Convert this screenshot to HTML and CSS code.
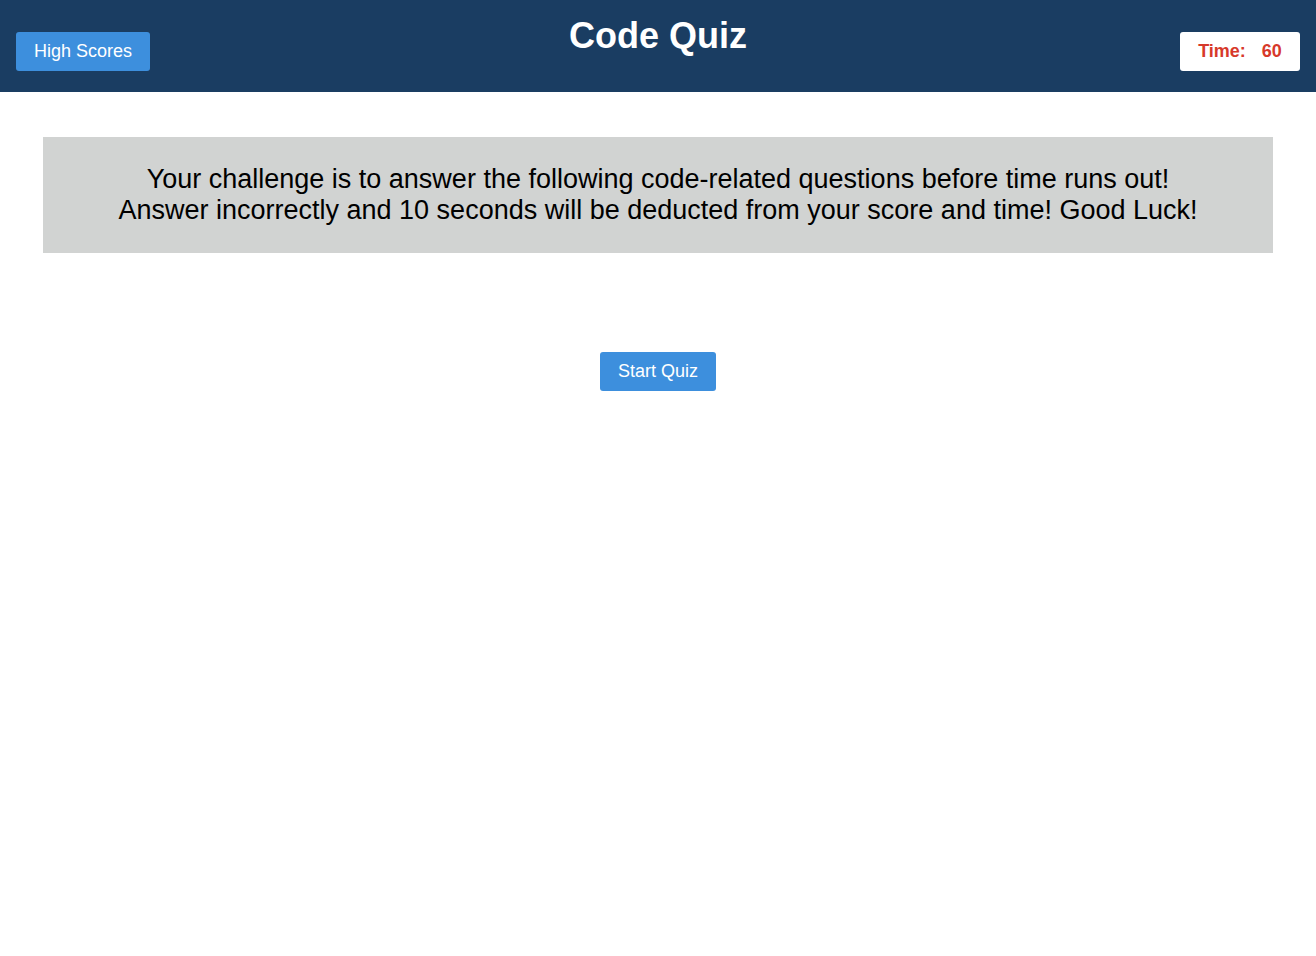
FILE: index.html
```html
<!DOCTYPE html>
<html>
<head>
<meta charset="utf-8">
<title>Code Quiz</title>
<link rel="stylesheet" href="styles.css">
</head>
<body>
<header class="topbar">
  <div class="left"><button class="btn">High Scores</button></div>
  <h1 class="title">Code Quiz</h1>
  <div class="right"><div class="timer"><span>Time:</span><span>60</span></div></div>
</header>
<main class="content">
  <div class="intro">
    <p>Your challenge is to answer the following code-related questions before time runs out!<br>Answer incorrectly and 10 seconds will be deducted from your score and time! Good Luck!</p>
  </div>
  <div class="start">
    <button class="btn">Start Quiz</button>
  </div>
</main>
</body>
</html>
```

FILE: styles.css
```css
* { box-sizing: border-box; }
body {
  margin: 0;
  font-family: "Liberation Sans", Arial, sans-serif;
  background: #fff;
}
.topbar {
  height: 92px;
  background: #1a3d62;
  display: grid;
  grid-template-columns: 1fr auto 1fr;
  align-items: start;
  padding: 0 16px;
}
.left { display: flex; justify-content: flex-start; }
.right { display: flex; justify-content: flex-end; }
.btn {
  font-family: "Liberation Sans", Arial, sans-serif;
  font-size: 18px;
  color: #fff;
  background: #3d8fdd;
  border: none;
  border-radius: 3px;
  height: 39px;
  padding: 0 18px;
  cursor: pointer;
}
.topbar .btn { margin-top: 32px; }
.title {
  margin: 0;
  margin-top: 15px;
  font-size: 36px;
  font-weight: bold;
  color: #fff;
  line-height: 41px;
}
.timer {
  margin-top: 32px;
  width: 120px;
  height: 39px;
  background: #fff;
  border-radius: 3px;
  display: flex;
  align-items: center;
  justify-content: center;
  gap: 16px;
  color: #d7392a;
  font-weight: bold;
  font-size: 18px;
}
.content {
  padding: 45px 43px 0;
}
.intro {
  background: #d1d3d2;
  height: 116px;
  display: flex;
  align-items: center;
  justify-content: center;
}
.intro p {
  margin: 0;
  text-align: center;
  font-size: 27px;
  line-height: 31px;
  color: #000;
}
.start {
  display: flex;
  justify-content: center;
  margin-top: 99px;
}
```
